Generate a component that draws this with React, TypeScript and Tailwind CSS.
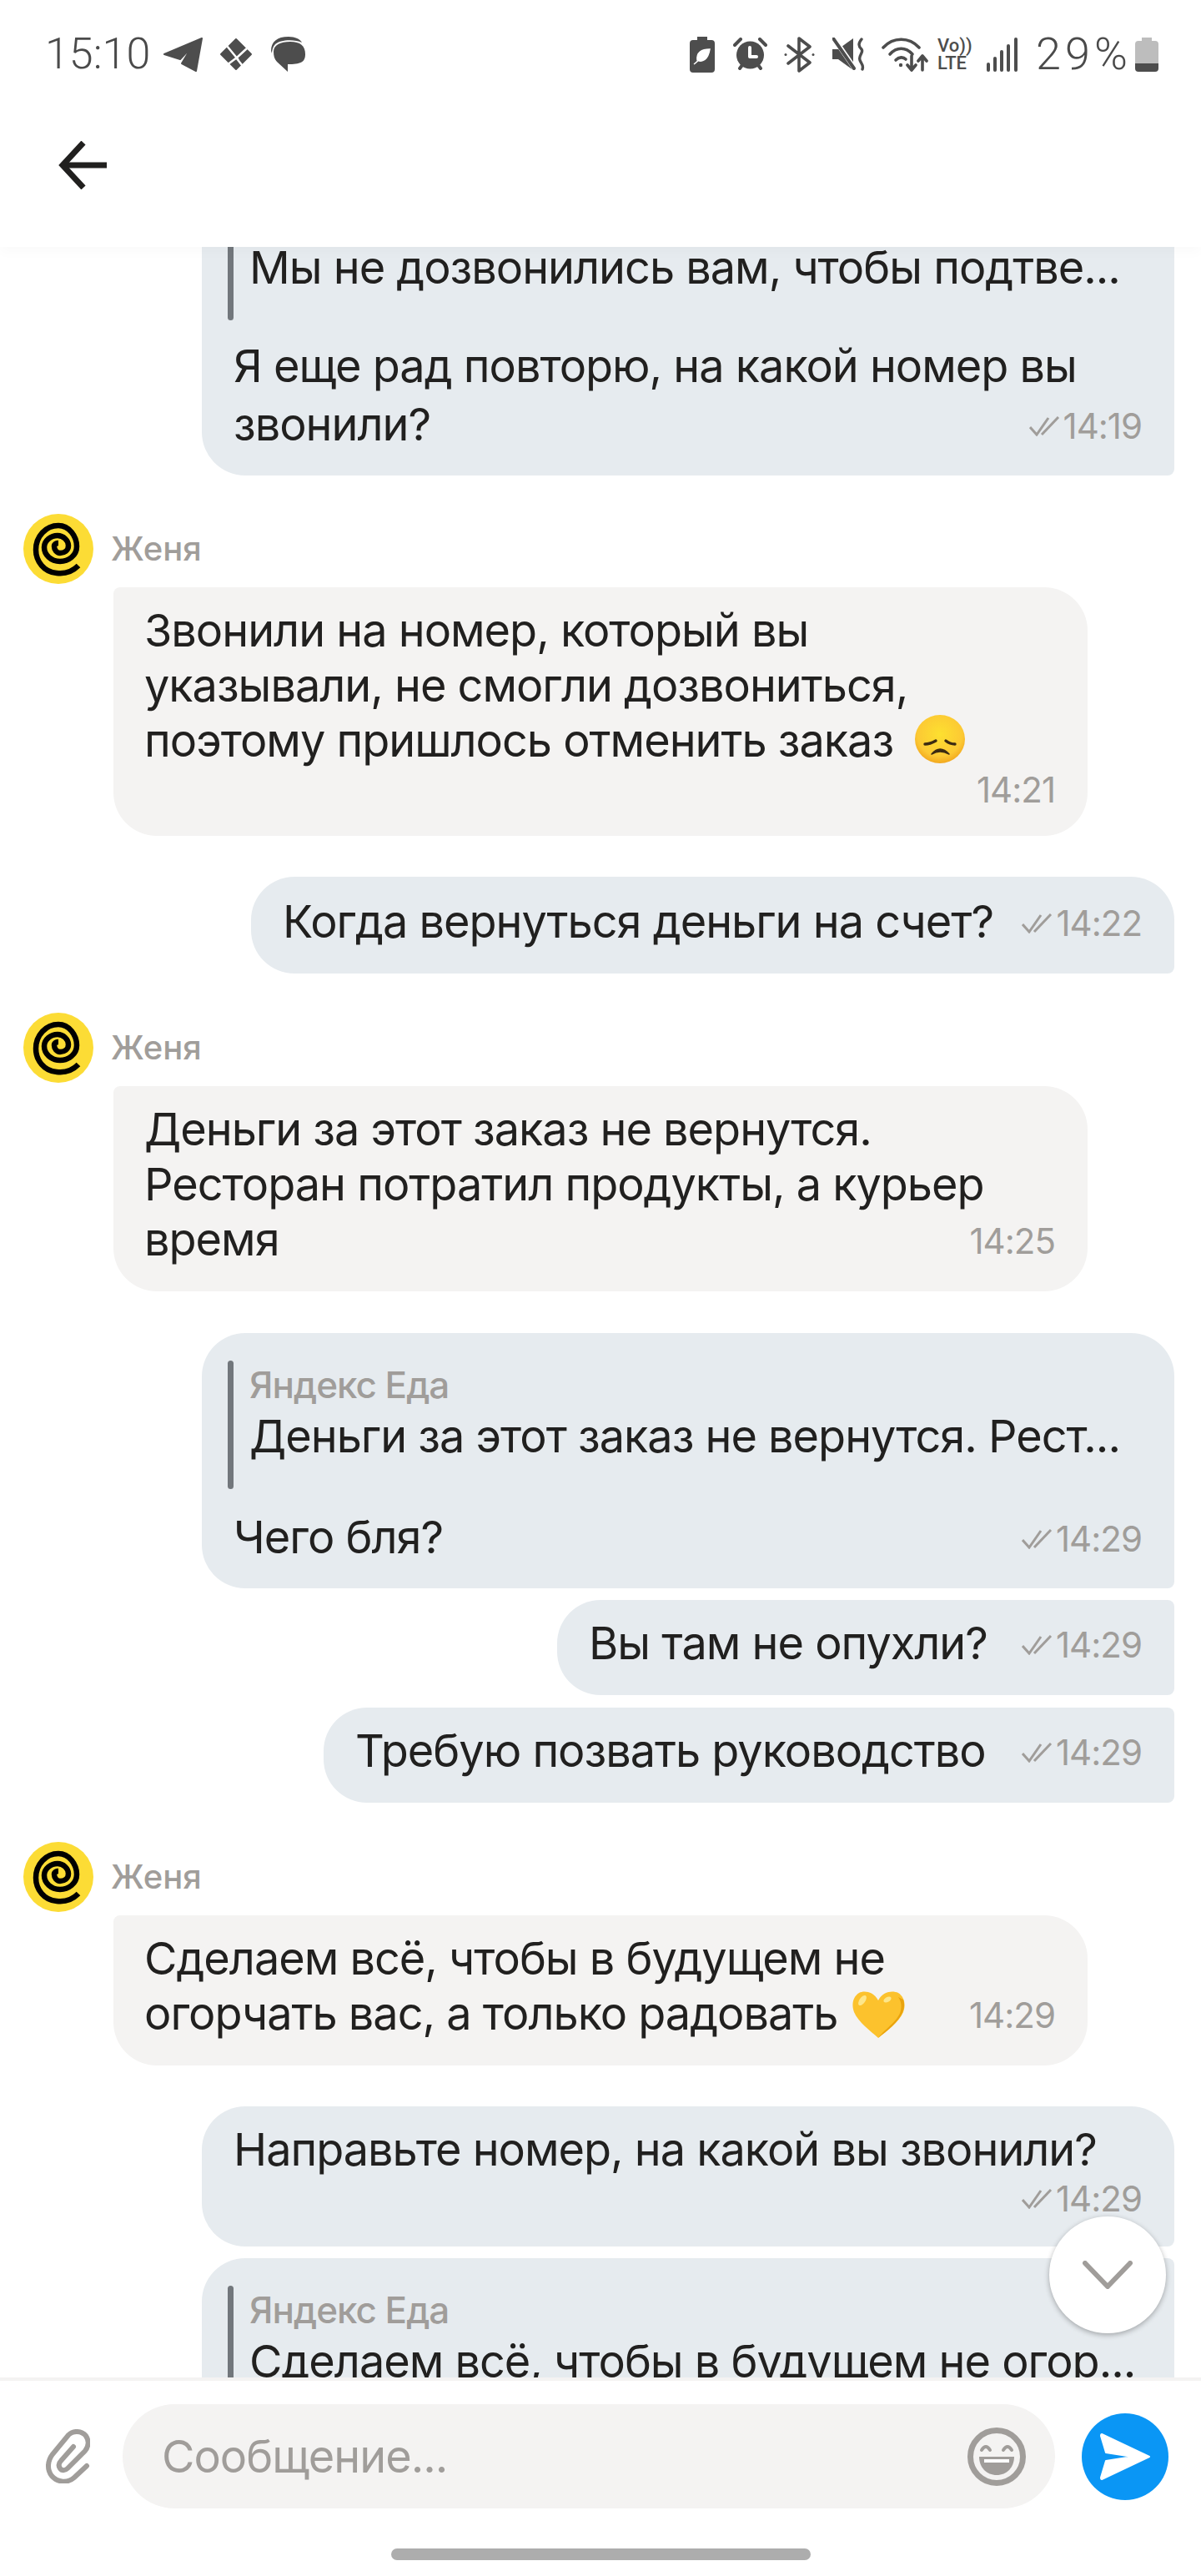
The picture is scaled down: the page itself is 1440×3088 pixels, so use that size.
import { ReactNode } from "react";

const sans = "font-['Inter','Noto_Sans',sans-serif]";

function Telegram() {
  return (
    <svg width="48" height="43" viewBox="0 0 48 43" fill="#4d4d4d" stroke="#4d4d4d" strokeWidth="2" strokeLinejoin="round">
      <path d="M47 2 L2 21 L21 27 L35 12 L23 32 L40 41 Z" />
    </svg>
  );
}

function Diamond() {
  return (
    <svg width="40" height="40" viewBox="0 0 40 40" fill="#4d4d4d" stroke="#4d4d4d" strokeWidth="2" strokeLinejoin="round">
      <path d="M20 2 L38 20 L20 38 L2 20 Z" />
      <path d="M9 10 L23 27 M33 13 L20 25 M21 24 L9 33 M20 24 L31 38" fill="none" stroke="#fff" strokeWidth="2.5" />
    </svg>
  );
}

function ChatBubble() {
  return (
    <svg width="43" height="42" viewBox="0 0 43 42">
      <path d="M1 17 C1 6 8 0 22 0 C30 0 36 3 38 7 C30 3 12 3 6 9 C3 12 2 17 2 20 Z" fill="#4d4d4d" />
      <path d="M4 18 C4 10 12 6 24 6 C36 6 42 11 42 21 C42 31 36 33 21 33 L21 42 L8 30 C5 27 4 23 4 18 Z" fill="#4d4d4d" />
    </svg>
  );
}

function BatteryLeaf() {
  return (
    <svg width="30" height="43" viewBox="0 0 30 43">
      <path d="M9 0 H21 V4 H26 Q30 4 30 8 V39 Q30 43 26 43 H4 Q0 43 0 39 V8 Q0 4 4 4 H9 Z" fill="#4d4d4d" />
      <path d="M24 15 C14 15 8 19 9 28 C15 31 22 28 24 15 Z M5 33 C9 30 13 26 17 22" fill="#fff" stroke="#fff" strokeWidth="1.5" />
    </svg>
  );
}

function Alarm() {
  return (
    <svg width="41" height="40" viewBox="0 0 41 40" fill="none" stroke="#4d4d4d" strokeLinecap="round">
      <circle cx="20.5" cy="21" r="16.5" fill="#4d4d4d" stroke="none" />
      <path d="M2 9 L9 2 M39 9 L32 2 M8 37 L11 33 M33 37 L30 33" strokeWidth="4" />
      <path d="M20 12 V23 H28" stroke="#fff" strokeWidth="4" strokeLinejoin="round" />
    </svg>
  );
}

function Bluetooth() {
  return (
    <svg width="37" height="43" viewBox="0 0 37 43" fill="none" stroke="#4d4d4d" strokeWidth="3.6" strokeLinejoin="round" strokeLinecap="round">
      <path d="M5 11 L31 31 L18 41 V2 L31 12 L5 32" />
      <circle cx="2" cy="21.5" r="1.5" fill="#4d4d4d" stroke="none" />
      <circle cx="35" cy="21.5" r="1.5" fill="#4d4d4d" stroke="none" />
    </svg>
  );
}

function Muted() {
  return (
    <svg width="40" height="40" viewBox="0 0 40 40">
      <path d="M0 14 H7 L25 1 V39 L7 26 H0 Z" fill="#4d4d4d" />
      <path d="M2 1 L28 39" stroke="#fff" strokeWidth="6" />
      <path d="M1 1 L26 37" stroke="#4d4d4d" strokeWidth="4" strokeLinecap="round" />
      <path d="M35 2 C31 7 31 10 35 14 C38 18 31 21 33 27 C34 31 38 33 36 38" fill="none" stroke="#4d4d4d" strokeWidth="3.4" strokeLinecap="round" />
    </svg>
  );
}

function Wifi() {
  return (
    <svg width="56" height="41" viewBox="0 0 56 41" fill="none" stroke="#4d4d4d" strokeWidth="3.6" strokeLinecap="round" strokeLinejoin="round">
      <path d="M2 12 C14 -1 33 -1 45 12" />
      <path d="M10 20 C18 11 29 11 37 20" />
      <path d="M17 27 C21 23 26 23 29 26" />
      <circle cx="23" cy="33" r="2.2" fill="#4d4d4d" stroke="none" />
      <path d="M36 22 V39 M31 33 L36 39 L41 33" />
      <path d="M49 39 V22 M44 28 L49 22 L54 28" />
    </svg>
  );
}

function Signal() {
  return (
    <svg width="37" height="41" viewBox="0 0 37 41" fill="#4d4d4d">
      <rect x="0" y="30" width="4" height="11" rx="2" />
      <rect x="8" y="23" width="4" height="18" rx="2" />
      <rect x="16" y="15" width="4" height="26" rx="2" />
      <rect x="24" y="8" width="4" height="33" rx="2" />
      <rect x="33" y="0" width="4" height="41" rx="2" />
    </svg>
  );
}

function Battery() {
  return (
    <svg width="28" height="41" viewBox="0 0 28 41">
      <path d="M8 0 H20 V4 H24 Q28 4 28 8 V31 H0 V8 Q0 4 4 4 H8 Z" fill="#bdbdbd" />
      <path d="M0 31 H28 V37 Q28 41 24 41 H4 Q0 41 0 37 Z" fill="#4d4d4d" />
    </svg>
  );
}

function BackArrow() {
  return (
    <svg width="58" height="58" viewBox="0 0 58 58" fill="none" stroke="#21201f" strokeWidth="7">
      <path d="M58 29 H6" />
      <path d="M30 2 L5 29 L30 56" />
    </svg>
  );
}

function Avatar() {
  return (
    <svg width="84" height="84" viewBox="0 0 84 84" className="shrink-0">
      <circle cx="42" cy="42" r="42" fill="#fcdc35" />
      <path
        d="M66 62 C58 70 48 72 40 71 C25 70 15 57 15 43 C15 27 27 14 42 14 C55 14 64 27 64 39 C64 50 54 57 44 57 C33 57 25 49 25 40 C25 32 33 26 41 26 C48 26 54 32 54 38 C54 44 49 47 44 47 C40 47 37 43 37 39 C37 36 40 35 42 35"
        fill="none"
        stroke="#000"
        strokeWidth="6.5"
        strokeLinecap="butt"
      />
    </svg>
  );
}

function SadEmoji() {
  return (
    <svg width="60" height="58" viewBox="0 0 60 58" className="ml-[12px] inline-block align-[-8px]">
      <defs>
        <radialGradient id="sad" cx="50%" cy="40%" r="60%">
          <stop offset="0%" stopColor="#fde030" />
          <stop offset="75%" stopColor="#fcc934" />
          <stop offset="100%" stopColor="#f2a81e" />
        </radialGradient>
      </defs>
      <ellipse cx="30" cy="29" rx="30" ry="29" fill="url(#sad)" />
      <path d="M12 35 Q18 35 25 31 M37 31 Q42 35 48 35" stroke="#3b2a12" strokeWidth="3.4" strokeLinecap="round" fill="none" />
      <path d="M20 47 Q30 35 41 47 Q30 41 20 47 Z" fill="#3b2a12" stroke="#3b2a12" strokeWidth="1.6" strokeLinejoin="round" />
    </svg>
  );
}

function HeartEmoji() {
  return (
    <svg width="63" height="57" viewBox="0 0 63 57" className="ml-[3px] inline-block align-[-10px]">
      <path d="M31 12 C25 1 14 0 8 3 C0 8 -1 18 2 26 C7 38 22 49 31 57 C41 49 56 38 61 26 C64 18 63 8 55 3 C48 0 37 1 31 12 Z" fill="#fcc22d" />
      <path d="M61 11 C63 17 62 22 60 27 C55 38 41 49 31 57 C40 45 55 37 58 24 C59 19 59 14 55 8 Z" fill="#e9a30e" />
      <ellipse cx="12" cy="12" rx="3.5" ry="7" transform="rotate(35 12 12)" fill="#fde68a" />
      <ellipse cx="42" cy="11" rx="5" ry="3" transform="rotate(-30 42 11)" fill="#fde68a" />
    </svg>
  );
}

function Checks() {
  return (
    <svg width="37" height="24" viewBox="0 0 37 24" fill="none" stroke="#a09d9a" strokeWidth="3" className="shrink-0">
      <path d="M1 13 L9 22 L23 2" />
      <path d="M15 22 L35 1" />
    </svg>
  );
}

function Time({ value, read }: { value: string; read?: boolean }) {
  return (
    <span className="flex items-center gap-[4px] text-[42px] leading-[52px] font-normal tracking-[-1px] whitespace-nowrap text-[#a09d9a]">
      {read && <Checks />}
      {value}
    </span>
  );
}

function Quote({ text, className = "mb-[25px]" }: { text: string; className?: string }) {
  return (
    <div className={`ml-[-7px] flex h-[154px] gap-[19px] ${className}`}>
      <span className="w-[7px] rounded-full bg-[#72777c]" />
      <div className="min-w-0">
        <p className="text-[44px] leading-[58px] font-medium text-[#a09d9a]">Яндекс Еда</p>
        <p className="mt-[4px] text-[54px] leading-[58px] tracking-[-1px] whitespace-nowrap text-[#21201f]">{text}</p>
      </div>
    </div>
  );
}

function Outgoing({
  width,
  flatTop,
  children,
  className = "",
}: {
  width: number;
  flatTop?: boolean;
  children: ReactNode;
  className?: string;
}) {
  return (
    <div
      style={{ width }}
      className={`mr-8 ml-auto shrink-0 rounded-[52px] rounded-br-[8px] bg-[#e6ebef] pr-[39px] pl-[38px] text-[54px] leading-[66px] tracking-[-1px] text-[#21201f] ${flatTop ? "rounded-tr-[8px]" : ""} ${className}`}
    >
      {children}
    </div>
  );
}

function Line({ text, time }: { text: string; time: string }) {
  return (
    <div className="flex items-center justify-between pt-[19px] pb-[29px]">
      <span className="whitespace-nowrap">{text}</span>
      <span className="mt-[4px]">
        <Time value={time} read />
      </span>
    </div>
  );
}

function Incoming({ children, className = "" }: { children: ReactNode; className?: string }) {
  return (
    <div className={`shrink-0 ${className}`}>
      <div className="ml-7 flex h-[84px] items-center gap-[21px]">
        <Avatar />
        <span className="text-[40px] font-medium text-[#a09d9a]">Женя</span>
      </div>
      <div className="mt-1 ml-[136px] w-[1168px] rounded-[52px] rounded-tl-[8px] bg-[#f4f3f2] pt-[19px] pr-[39px] pb-[29px] pl-[37px] text-[54px] leading-[66px] tracking-[-1px] text-[#21201f]">
        {children}
      </div>
    </div>
  );
}

export default function App() {
  return (
    <div className={`relative flex h-[3088px] w-[1440px] flex-col overflow-hidden bg-white ${sans}`}>
      <header className="relative z-10 h-[296px] shrink-0 bg-white shadow-[0_6px_14px_rgba(0,0,0,0.025)]">
        <div className="flex h-[130px] items-start justify-between pt-[43px] pr-[51px] pl-[54px]">
          <div className="flex items-center">
            <span className="w-[141px] font-['Roboto',sans-serif] text-[52px] leading-[44px] font-light text-[#4a4a4a]">15:10</span>
            <Telegram />
            <span className="ml-[20px]"><Diamond /></span>
            <span className="ml-[21px]"><ChatBubble /></span>
          </div>
          <div className="flex items-center">
            <BatteryLeaf />
            <span className="ml-[22px]"><Alarm /></span>
            <span className="ml-[20px]"><Bluetooth /></span>
            <span className="ml-[21px]"><Muted /></span>
            <span className="ml-[19px]"><Wifi /></span>
            <div className="ml-[11px] flex w-[40px] flex-col font-['Roboto',sans-serif] text-[#4d4d4d]">
              <span className="text-[22px] leading-[21px] font-medium">Vo))</span>
              <span className="text-[22px] leading-[22px] font-medium">LTE</span>
            </div>
            <span className="ml-[19px]"><Signal /></span>
            <span className="ml-[22px] w-[119px] font-['Roboto',sans-serif] text-[54px] leading-[44px] font-light tracking-[5px] whitespace-nowrap text-[#4a4a4a]">29%</span>
            <Battery />
          </div>
        </div>
        <div className="mt-[39px] ml-[70px]">
          <BackArrow />
        </div>
      </header>

      <main className="relative flex min-h-0 flex-1 flex-col overflow-hidden">
        <Outgoing width={1166} className="mt-[-99px] pt-[33px]">
          <Quote text="Мы не дозвонились вам, чтобы подтве..." className="mb-[22px]" />
          <div className="mb-[4px] whitespace-nowrap">Я еще рад повторю, на какой номер вы</div>
          <div className="flex items-center justify-between pb-[28px]">
            <span>звонили?</span>
            <span className="mt-[4px]"><Time value="14:19" read /></span>
          </div>
        </Outgoing>

        <Incoming className="mt-[46px]">
          <p className="whitespace-nowrap">Звонили на номер, который вы</p>
          <p className="whitespace-nowrap">указывали, не смогли дозвониться,</p>
          <p className="whitespace-nowrap">
            поэтому пришлось отменить заказ <SadEmoji />
          </p>
          <div className="flex h-[52px] justify-end">
            <Time value="14:21" />
          </div>
        </Incoming>

        <Outgoing width={1107} className="mt-[49px] pt-[2px]">
          <Line text="Когда вернуться деньги на счет?" time="14:22" />
        </Outgoing>

        <Incoming className="mt-[47px]">
          <p className="whitespace-nowrap">Деньги за этот заказ не вернутся.</p>
          <p className="whitespace-nowrap">Ресторан потратил продукты, а курьер</p>
          <div className="flex items-center justify-between">
            <span>время</span>
            <span className="mt-[4px]"><Time value="14:25" /></span>
          </div>
        </Incoming>

        <Outgoing width={1166} className="mt-[50px] pt-[33px]">
          <Quote text="Деньги за этот заказ не вернутся. Рест..." />
          <div className="flex items-center justify-between pb-[28px]">
            <span>Чего бля?</span>
            <span className="mt-[4px]"><Time value="14:29" read /></span>
          </div>
        </Outgoing>

        <Outgoing width={740} flatTop className="mt-[14px]">
          <Line text="Вы там не опухли?" time="14:29" />
        </Outgoing>

        <Outgoing width={1020} flatTop className="mt-[15px]">
          <Line text="Требую позвать руководство" time="14:29" />
        </Outgoing>

        <Incoming className="mt-[47px]">
          <p className="whitespace-nowrap">Сделаем всё, чтобы в будущем не</p>
          <div className="flex items-center justify-between">
            <span className="whitespace-nowrap">
              огорчать вас, а только радовать <HeartEmoji />
            </span>
            <span className="mt-[4px]"><Time value="14:29" /></span>
          </div>
        </Incoming>

        <Outgoing width={1166} className="mt-[49px] pt-[19px] pb-[31px]">
          <div>Направьте номер, на какой вы звонили?</div>
          <div className="flex h-[52px] justify-end">
            <Time value="14:29" read />
          </div>
        </Outgoing>

        <Outgoing width={1166} flatTop className="mt-[14px] pt-[33px]">
          <Quote text="Сделаем всё, чтобы в будущем не огор..." />
        </Outgoing>

        <button className="absolute top-[2361px] left-[1258px] flex size-[140px] items-center justify-center rounded-full bg-white shadow-[0_2px_6px_rgba(0,0,0,0.3)]">
          <svg width="60" height="34" viewBox="0 0 60 34" fill="none" stroke="#a09d9a" strokeWidth="6" strokeLinecap="round" strokeLinejoin="round">
            <path d="M3 3 L30 31 L57 3" />
          </svg>
        </button>
      </main>

      <footer className="z-10 h-[238px] shrink-0 border-t-4 border-[#f4f3f2] bg-white">
        <div className="mt-[28px] flex h-[125px] items-center pl-[54px]">
          <svg width="54" height="65" viewBox="0 0 54 65" fill="none" stroke="#a09d9a" strokeWidth="6" strokeLinecap="round" className="shrink-0">
            <path d="M50 44 L35 58 C27 65 15 64 8 56 C2 48 3 38 9 30 L28 7 C34 1 44 2 49 8 C53 14 52 21 48 26 L27 47 C24 50 20 50 18 47 C16 44 16 41 19 38 L34 21" />
          </svg>
          <div className="ml-[39px] flex h-[125px] w-[1118px] shrink-0 items-center justify-between rounded-full bg-[#f4f3f2] pr-[35px] pl-[47px]">
            <span className="text-[54px] tracking-[-1px] text-[#a09d9a]">Сообщение...</span>
            <svg width="70" height="70" viewBox="0 0 70 70">
              <circle cx="35" cy="35" r="31.5" fill="none" stroke="#a09d9a" strokeWidth="7" />
              <path d="M17 27 Q22 19 27 27 M43 27 Q48 19 53 27" fill="none" stroke="#a09d9a" strokeWidth="4" strokeLinecap="round" />
              <path d="M14 35 H56 C56 48 47 57 35 57 C23 57 14 48 14 35 Z" fill="#a09d9a" />
              <path d="M20 38 H50 V42 H20 Z" fill="#fff" />
            </svg>
          </div>
          <div className="ml-[32px] flex size-[104px] shrink-0 items-center justify-center rounded-full bg-[#0a96f5]">
            <svg width="62" height="62" viewBox="0 0 62 62">
              <path d="M3 4 L60 31 L3 58 C2 58 2 57 2 56 L8 36 L40 31 L8 26 L2 6 C2 5 2 4 3 4 Z" fill="#fff" stroke="#fff" strokeWidth="2" strokeLinejoin="round" />
            </svg>
          </div>
        </div>
        <div className="mx-auto mt-[48px] h-[14px] w-[503px] rounded-full bg-[#adadad]" />
      </footer>
    </div>
  );
}
